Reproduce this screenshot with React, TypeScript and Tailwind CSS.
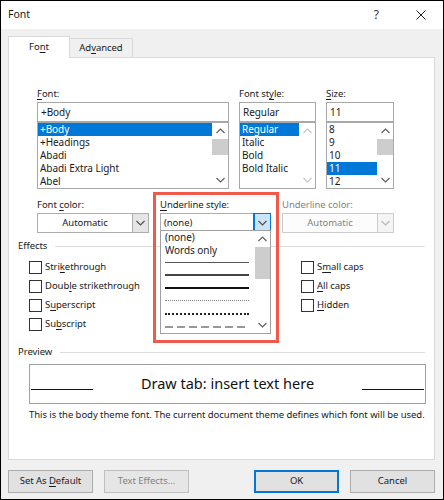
import React from "react";

const U = ({ children }: { children: React.ReactNode }) => (
  <span className="underline underline-offset-2 decoration-1">{children}</span>
);

const Chev = ({ up, color = "#606060" }: { up?: boolean; color?: string }) => (
  <svg width="9" height="6" viewBox="0 0 9 6">
    <polyline
      points={up ? "0.5,5 4.5,1 8.5,5" : "0.5,1 4.5,5 8.5,1"}
      fill="none"
      stroke={color}
      strokeWidth="1.2"
    />
  </svg>
);

const ScrollBar = ({ disabled, thumb = true }: { disabled?: boolean; thumb?: boolean }) => (
  <div className="w-[16px] h-full flex flex-col bg-white">
    <div className="h-[16px] flex items-center justify-center">
      <Chev up color={disabled ? "#c8c8c8" : "#606060"} />
    </div>
    {thumb ? <div className="h-[16px] bg-[#cdcdcd]" /> : null}
    <div className="flex-1" />
    <div className="h-[16px] flex items-center justify-center">
      <Chev color={disabled ? "#c8c8c8" : "#606060"} />
    </div>
  </div>
);

const ListCol = ({
  width,
  label,
  value,
  items,
  selected,
  disabledScroll,
}: {
  width: string;
  label: React.ReactNode;
  value: string;
  items: string[];
  selected: number;
  disabledScroll?: boolean;
}) => (
  <div className={`${width} flex flex-col`}>
    <div className="h-[16px] leading-[16px]">{label}</div>
    <div className="h-[20px] border border-[#a8a8a8] px-[3px] leading-[18px] text-[10px]">{value}</div>
    <div className="h-[67px] border border-[#a8a8a8] flex">
      <div className="flex-1 flex flex-col">
        {items.map((it, i) => (
          <div
            key={it + i}
            className={`h-[13px] leading-[13px] pl-[2px] text-[10px] ${
              i === selected ? "bg-[#0078d7] text-white" : ""
            }`}
          >
            {it}
          </div>
        ))}
      </div>
      <ScrollBar disabled={disabledScroll} thumb={!disabledScroll} />
    </div>
  </div>
);

const Combo = ({
  value,
  disabled,
  open,
  align = "center",
}: {
  value: string;
  disabled?: boolean;
  open?: boolean;
  align?: "center" | "left";
}) => (
  <div
    className={`h-[20px] flex border ${
      disabled ? "border-[#cccccc] bg-[#fcfcfc]" : "border-[#adadad] bg-white"
    }`}
  >
    <div
      className={`flex-1 leading-[18px] ${align === "center" ? "text-center" : "pl-[3px]"} ${
        disabled ? "text-[#838383]" : ""
      }`}
    >
      {value}
    </div>
    <div
      className={`w-[16px] flex items-center justify-center border-l ${
        open
          ? "bg-[#cce4f7] border-[#0078d7] outline outline-1 outline-[#0078d7]"
          : disabled
          ? "bg-[#f4f4f4] border-[#cccccc]"
          : "bg-[#e5e5e5] border-[#adadad]"
      }`}
    >
      <Chev color={disabled ? "#b8b8b8" : "#505050"} />
    </div>
  </div>
);

const Check = ({ children }: { children: React.ReactNode }) => (
  <div className="h-[19px] flex items-center">
    <div className="w-[13px] h-[13px] border border-[#333333] bg-white shrink-0" />
    <div className="ml-[3px] whitespace-nowrap">{children}</div>
  </div>
);

const Btn = ({
  children,
  className = "",
}: {
  children: React.ReactNode;
  className?: string;
}) => (
  <div className={`w-[85px] h-[23px] flex items-center justify-center border ${className}`}>
    <span>{children}</span>
  </div>
);

export default function App() {
  return (
    <div className="w-[444px] h-[500px] border border-black bg-[#f0f0f0] flex flex-col font-['Noto_Sans',sans-serif] text-[9.5px] tracking-[-0.05px] text-[#1a1a1a] overflow-hidden">
      {/* Title bar */}
      <div className="h-[28px] bg-white flex items-center pl-[7px] shrink-0">
        <div className="text-[10.5px] tracking-normal">Font</div>
        <div className="flex-1" />
        <div className="text-[12px] mr-[37px] text-[#333]">?</div>
        <svg width="10" height="10" viewBox="0 0 10 10" className="mr-[17px]">
          <line x1="0.5" y1="0.5" x2="9.5" y2="9.5" stroke="#222" strokeWidth="1" />
          <line x1="9.5" y1="0.5" x2="0.5" y2="9.5" stroke="#222" strokeWidth="1" />
        </svg>
      </div>

      <div className="px-[7px] pt-[7px] flex flex-col">
        {/* Tabs */}
        <div className="flex items-end h-[22px] -mb-px relative z-10">
          <div className="w-[62px] h-[22px] bg-white border border-b-0 border-[#d9d9d9] flex items-center justify-center">
            <span>
              Fo<U>n</U>t
            </span>
          </div>
          <div className="w-[63px] h-[20px] border border-l-0 border-b-0 border-[#d9d9d9] flex items-center justify-center">
            <span>
              Ad<U>v</U>anced
            </span>
          </div>
        </div>

        {/* Panel */}
        <div className="h-[403px] w-[427px] bg-white border border-[#d9d9d9] pt-[28px] px-[9px] flex flex-col">
          {/* Row 1 lists */}
          <div className="ml-[19px] flex">
            <ListCol
              width="w-[192px]"
              label={
                <>
                  <U>F</U>ont:
                </>
              }
              value="+Body"
              items={["+Body", "+Headings", "Abadi", "Abadi Extra Light", "Abel"]}
              selected={0}
            />
            <div className="w-[10px]" />
            <ListCol
              width="w-[77px]"
              label={
                <>
                  Font st<U>y</U>le:
                </>
              }
              value="Regular"
              items={["Regular", "Italic", "Bold", "Bold Italic", ""]}
              selected={0}
              disabledScroll
            />
            <div className="w-[10px]" />
            <ListCol
              width="w-[68px]"
              label={
                <>
                  <U>S</U>ize:
                </>
              }
              value="11"
              items={["8", "9", "10", "11", "12"]}
              selected={3}
            />
          </div>

          {/* Row 2 combos */}
          <div className="ml-[19px] mt-[8px] flex">
            <div className="w-[112px] flex flex-col">
              <div className="h-[16px] leading-[16px]">
                Font <U>c</U>olor:
              </div>
              <Combo value="Automatic" />
            </div>
            <div className="w-[11px]" />
            <div className="w-[111px] flex flex-col relative z-20">
              <div className="h-[16px] leading-[16px]">
                <U>U</U>nderline style:
              </div>
              <Combo value="(none)" open align="left" />
              {/* open list */}
              <div className="absolute left-0 top-[33px] w-[111px] h-[104px] border border-[#a0a0a0] bg-white flex">
                <div className="flex-1 flex flex-col pl-[4px] pr-[6px]">
                  <div className="h-[13px] leading-[13px] text-[10px]">(none)</div>
                  <div className="h-[13px] leading-[13px] text-[10px]">Words only</div>
                  <div className="h-[12px] flex items-center">
                    <div className="w-full border-t border-[#555555]" />
                  </div>
                  <div className="h-[13px] flex items-center">
                    <div className="w-full border-t-2 border-[#444444]" />
                  </div>
                  <div className="h-[13px] flex items-center">
                    <div className="w-full border-t-2 border-[#111111]" />
                  </div>
                  <div className="h-[13px] flex items-center">
                    <div className="w-full border-t border-dotted border-[#888888]" />
                  </div>
                  <div className="h-[13px] flex items-center">
                    <div className="w-full border-t-2 border-dotted border-[#222222]" />
                  </div>
                  <div className="h-[13px] flex items-center">
                    <svg width="84" height="2" viewBox="0 0 84 2">
                      <line x1="0" y1="1" x2="84" y2="1" stroke="#333" strokeWidth="1.2" strokeDasharray="8 4" />
                    </svg>
                  </div>
                </div>
                <div className="w-[16px] flex flex-col bg-white">
                  <div className="h-[16px] flex items-center justify-center">
                    <Chev up />
                  </div>
                  <div className="h-[32px] bg-[#cdcdcd]" />
                  <div className="flex-1" />
                  <div className="h-[16px] flex items-center justify-center">
                    <Chev />
                  </div>
                </div>
              </div>
              {/* highlight */}
              <div className="absolute left-[-7px] top-[-5px] w-[126px] h-[151px] border-[3px] border-[#f15a4a] pointer-events-none" />
            </div>
            <div className="w-[11px]" />
            <div className="w-[112px] flex flex-col">
              <div className="h-[16px] leading-[16px] text-[#838383]">Underline color:</div>
              <Combo value="Automatic" disabled />
            </div>
          </div>

          {/* Effects */}
          <div className="mt-[5px] h-[16px] flex items-center">
            <span className="leading-[16px]">Effects</span>
            <div className="flex-1 ml-[8px] h-px bg-[#dcdcdc]" />
          </div>
          <div className="mt-[4px] flex">
            <div className="ml-[11px] w-[272px] flex flex-col">
              <Check>
                Stri<U>k</U>ethrough
              </Check>
              <Check>
                Doub<U>l</U>e strikethrough
              </Check>
              <Check>
                S<U>u</U>perscript
              </Check>
              <Check>
                Su<U>b</U>script
              </Check>
            </div>
            <div className="flex flex-col">
              <Check>
                S<U>m</U>all caps
              </Check>
              <Check>
                <U>A</U>ll caps
              </Check>
              <Check>
                <U>H</U>idden
              </Check>
            </div>
          </div>

          {/* Preview */}
          <div className="mt-[10px] h-[16px] flex items-center">
            <span className="leading-[16px]">Preview</span>
            <div className="flex-1 ml-[8px] h-px bg-[#dcdcdc]" />
          </div>
          <div className="mt-[4px] ml-[11px] w-[397px] h-[40px] border border-[#a0a0a0] flex items-center px-[1px]">
            <div className="w-[62px] h-[12px] border-b border-[#111]" />
            <div className="flex-1 text-center text-[14.5px] tracking-normal text-[#111]">Draw tab: insert text here</div>
            <div className="w-[62px] h-[12px] border-b border-[#111]" />
          </div>
          <div className="mt-[3px] ml-[11px] h-[16px] leading-[16px] whitespace-nowrap">
            This is the body theme font. The current document theme defines which font will be used.
          </div>
        </div>

        {/* Buttons */}
        <div className="mt-[10px] flex">
          <Btn className="bg-[#e1e1e1] border-[#adadad]">
            Set As <U>D</U>efault
          </Btn>
          <div className="w-[11px]" />
          <Btn className="bg-[#e6e6e6] border-[#bfbfbf] text-[#838383]">Text Effects...</Btn>
          <div className="w-[65px]" />
          <Btn className="bg-[#e1e1e1] border-[#0078d7] border-2">OK</Btn>
          <div className="w-[11px]" />
          <Btn className="bg-[#e1e1e1] border-[#adadad]">Cancel</Btn>
        </div>
      </div>
    </div>
  );
}
